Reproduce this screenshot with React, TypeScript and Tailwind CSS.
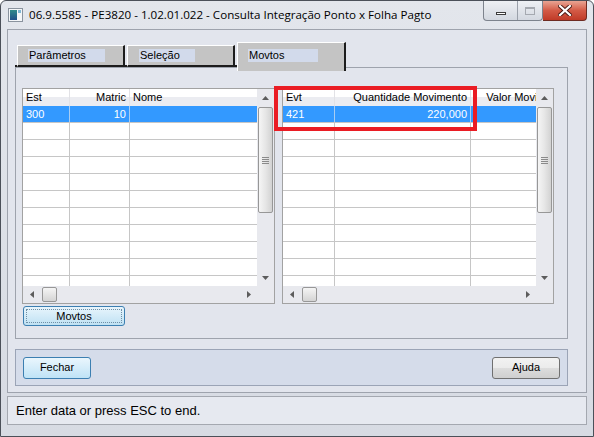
import React from 'react';

const sans = "font-['Liberation_Sans',Arial,sans-serif]";

type Col = { label: string; value: string; w: string; right?: boolean };

const estCols: Col[] = [
  { label: 'Est', value: '300', w: 'w-[47px]' },
  { label: 'Matric', value: '10', w: 'w-[60px]', right: true },
  { label: 'Nome', value: '', w: 'w-[140px]' },
];

const evtCols: Col[] = [
  { label: 'Evt', value: '421', w: 'w-[52px]' },
  { label: 'Quantidade Movimento', value: '220,000', w: 'w-[136px]', right: true },
  { label: 'Valor Movimento', value: '', w: 'w-[101px]', right: true },
];

function Tri({ dir }: { dir: 'up' | 'down' | 'left' | 'right' }) {
  const vertical = dir === 'up' || dir === 'down';
  const pts = {
    up: '0,4 3.5,0 7,4',
    down: '0,0 7,0 3.5,4',
    left: '4,0 0,3.5 4,7',
    right: '0,0 4,3.5 0,7',
  }[dir];
  return (
    <svg width={vertical ? 7 : 4} height={vertical ? 4 : 7} viewBox={vertical ? '0 0 7 4' : '0 0 4 7'}>
      <polygon points={pts} fill="#5c5c5c" />
    </svg>
  );
}

function VScroll() {
  return (
    <div className="flex w-[17px] shrink-0 flex-col items-center bg-[#e8e9ee]">
      <div className="flex h-[17px] w-full items-center justify-center">
        <Tri dir="up" />
      </div>
      <div className="mt-px flex h-[106px] w-[15px] flex-col items-center justify-center gap-[1px] rounded-[2px] border border-[#979797] bg-gradient-to-r from-[#f5f5f5] via-[#e6e6e6] to-[#d2d2d2]">
        <div className="h-px w-[7px] bg-[#8a8a8a]" />
        <div className="h-px w-[7px] bg-[#8a8a8a]" />
        <div className="h-px w-[7px] bg-[#8a8a8a]" />
        <div className="h-px w-[7px] bg-[#8a8a8a]" />
      </div>
      <div className="flex-1" />
      <div className="flex h-[17px] w-full items-center justify-center">
        <Tri dir="down" />
      </div>
    </div>
  );
}

function HScroll() {
  return (
    <div className="flex h-[17px] shrink-0 bg-[#e8e9ee]">
      <div className="flex flex-1 items-center">
        <div className="flex h-full w-[17px] items-center justify-center">
          <Tri dir="left" />
        </div>
        <div className="ml-[2px] h-[15px] w-[15px] rounded-[2px] border border-[#979797] bg-gradient-to-b from-[#f5f5f5] to-[#d4d4d4]" />
        <div className="flex-1" />
        <div className="flex h-full w-[17px] items-center justify-center">
          <Tri dir="right" />
        </div>
      </div>
      <div className="w-[17px]" />
    </div>
  );
}

function DataGrid({ cols, className }: { cols: Col[]; className: string }) {
  const empty = Array.from({ length: 10 });
  return (
    <div className={`flex h-[216px] shrink-0 flex-col border border-[#a2a2a2] bg-[#e8e9ee] ${className}`}>
      <div className="flex min-h-0 flex-1">
        <div className={`min-w-0 flex-1 overflow-hidden bg-white text-[11px] leading-[17px] text-black ${sans}`}>
          <div className="flex h-[17px] bg-[linear-gradient(#ffffff_0%,#ffffff_45%,#ebecf1_50%,#ebecf1_100%)]">
            {cols.map((c) => (
              <div
                key={c.label}
                className={`${c.w} shrink-0 whitespace-nowrap border-r border-[#e2e2e6] px-[3px] ${c.right ? 'text-right' : ''}`}
              >
                {c.label}
              </div>
            ))}
          </div>
          <div className="flex h-[17px] border-b border-[#c6c6c6] bg-[#3399ff] text-white">
            {cols.map((c) => (
              <div
                key={c.label}
                className={`${c.w} shrink-0 border-r border-[#a9cdf2] px-[3px] ${c.right ? 'text-right' : ''}`}
              >
                {c.value}
              </div>
            ))}
          </div>
          {empty.map((_, i) => (
            <div key={i} className="flex h-[17px] border-b border-[#c6c6c6]">
              {cols.map((c) => (
                <div key={c.label} className={`${c.w} shrink-0 border-r border-[#c6c6c6]`} />
              ))}
            </div>
          ))}
        </div>
        <VScroll />
      </div>
      <HScroll />
    </div>
  );
}

function Tab({ label, boxW, pl, active }: { label: string; boxW: string; pl: string; active?: boolean }) {
  if (active) {
    return (
      <div className="relative z-10 -mb-[4px] flex h-[29px] w-[109px] shrink-0 items-start border-l border-t border-r-2 border-l-white border-t-white border-r-[#1c1c1c] bg-[#c4c4c4] pl-[10px] pt-[6px]">
        <span className={`h-[13px] ${boxW} bg-[#d2daeb] pl-px text-[11px] leading-[13px] text-black ${sans}`}>{label}</span>
      </div>
    );
  }
  return (
    <div className={`flex h-[22px] w-[108px] shrink-0 items-start border-b-2 border-l border-t border-r-2 border-b-[#1c1c1c] border-l-white border-t-white border-r-[#1c1c1c] bg-[#c4c4c4] pt-[3px] ${pl}`}>
      <span className={`h-[13px] ${boxW} bg-[#d2daeb] pl-px text-[11px] leading-[13px] text-black ${sans}`}>{label}</span>
    </div>
  );
}

function WinButtons() {
  return (
    <div className="flex items-start">
      <div className="flex h-[20px] w-[60px] overflow-hidden rounded-b-[4px] border border-t-0 border-[#7d838d] bg-gradient-to-b from-[#eef0f4] to-[#d3d8e0]">
        <div className="flex w-[34px] items-end justify-center border-r border-[#9aa0aa] pb-[5px]">
          <div className="h-[3px] w-[10px] border border-[#3c3c3c] bg-white" />
        </div>
        <div className="flex flex-1 items-center justify-center">
          <div className="h-[8px] w-[10px] border border-[#a5a9b0] border-t-2" />
        </div>
      </div>
      <div className="flex h-[20px] w-[44px] items-center justify-center rounded-br-[4px] border border-l-0 border-t-0 border-[#6e2b22] bg-gradient-to-b from-[#e8a493] via-[#d35a46] to-[#c03a27]">
        <svg width="14" height="11" viewBox="0 0 14 11">
          <path d="M2 1 L12 10 M12 1 L2 10" stroke="#4a1a14" strokeWidth="4" strokeLinecap="square" />
          <path d="M2 1 L12 10 M12 1 L2 10" stroke="#ffffff" strokeWidth="2.2" strokeLinecap="square" />
        </svg>
      </div>
    </div>
  );
}

function AppIcon() {
  return (
    <svg width="15" height="14" viewBox="0 0 15 14">
      <rect x="0.5" y="0.5" width="14" height="13" fill="#f4f6f8" stroke="#8a939e" />
      <defs>
        <linearGradient id="appg" x1="0" y1="0" x2="0" y2="1">
          <stop offset="0" stopColor="#2f8a8a" />
          <stop offset="1" stopColor="#1f4f8a" />
        </linearGradient>
      </defs>
      <rect x="2" y="2" width="7" height="10" fill="url(#appg)" />
      <rect x="10" y="2" width="3" height="3" fill="#7fb6d4" />
    </svg>
  );
}

export default function App() {
  return (
    <div className="flex h-[437px] w-[594px] flex-col overflow-hidden rounded-t-[6px] border border-[#4b5059] bg-gradient-to-b from-[#e3e6ec] to-[#d7dbe3]">
      {/* title bar */}
      <div className="flex h-[28px] shrink-0 items-start">
        <div className="ml-[7px] mt-[7px]">
          <AppIcon />
        </div>
        <div className="ml-[6px] mt-[5px] text-[11.6px] leading-[17px] text-black font-['Open_Sans','Noto_Sans',sans-serif]">
          06.9.5585 - PE3820 - 1.02.01.022 - Consulta Integração Ponto x Folha Pagto
        </div>
        <div className="ml-auto mr-[6px]">
          <WinButtons />
        </div>
      </div>

      {/* client area */}
      <div className="mx-[6px] flex h-[364px] shrink-0 flex-col border border-[#9ea3ad] bg-[#e2e5ed] pt-[12px]">
        <div className="ml-[7px] flex h-[25px] items-end">
          <div className="h-[2px] w-[2px] bg-[#1c1c1c]" />
          <Tab label="Parâmetros" boxW="w-[77px]" pl="pl-[10px]" />
          <div className="h-[2px] w-[2px] bg-[#1c1c1c]" />
          <Tab label="Seleção" boxW="w-[56px]" pl="pl-[11px]" />
          <div className="h-[2px] w-[2px] bg-[#1c1c1c]" />
          <Tab label="Movtos" boxW="w-[70px]" pl="" active />
        </div>

        <div className="ml-[7px] flex h-[272px] w-[553px] flex-col border border-[#9ea3ad] pl-[6px] pt-[20px]">
          <div className="flex gap-[7px]">
            <DataGrid cols={estCols} className="w-[253px]" />
            <div className="relative">
              <DataGrid cols={evtCols} className="w-[272px]" />
              <div className="pointer-events-none absolute -left-[8px] -top-[2px] h-[45px] w-[203px] border-4 border-[#ea1c24]" />
            </div>
          </div>
          <button
            className={`ml-px mt-[2px] flex h-[20px] w-[102px] items-center justify-center rounded-[3px] border border-[#3c7fb1] bg-gradient-to-b from-[#e8f5fc] to-[#bfe1f3] p-[2px] text-[11px] text-black ${sans}`}
          >
            <span className="flex h-full w-full items-center justify-center border border-dotted border-[#6f8fa6]">Movtos</span>
          </button>
        </div>

        <div className="ml-[7px] mt-[10px] flex h-[37px] w-[553px] items-center justify-between border border-[#9ba4b6] bg-[#d5dcea] px-[7px]">
          <button
            className={`flex h-[22px] w-[68px] items-center justify-center rounded-[3px] border border-[#3c7fb1] bg-gradient-to-b from-[#eaf6fd] to-[#bfe3f6] text-[11px] text-black ${sans}`}
          >
            Fechar
          </button>
          <button
            className={`flex h-[22px] w-[68px] items-center justify-center rounded-[3px] border border-[#707070] bg-[linear-gradient(#f2f2f2_0%,#ebebeb_50%,#dddddd_50%,#cfcfcf_100%)] text-[11px] text-black ${sans}`}
          >
            Ajuda
          </button>
        </div>
      </div>

      {/* status bar */}
      <div className={`mx-[6px] mt-[3px] flex h-[29px] shrink-0 items-center border border-[#a4a8b0] bg-[#e6e9f0] pl-[8px] text-[13px] text-black ${sans}`}>
        Enter data or press ESC to end.
      </div>
    </div>
  );
}
